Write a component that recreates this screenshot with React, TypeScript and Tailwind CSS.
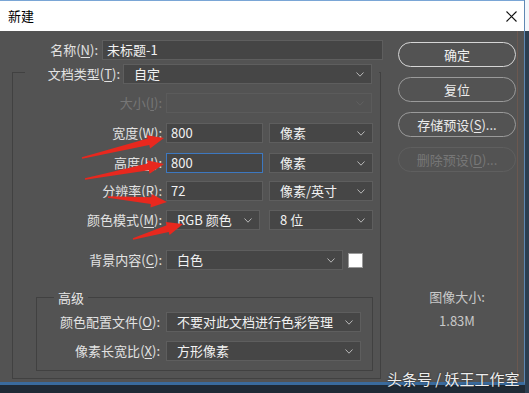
import React from 'react';

const Chevron = ({ dim }: { dim?: boolean }) => (
  <svg width="8" height="5" viewBox="0 0 8 5" className="shrink-0">
    <polyline points="0.5,0.5 4,4.2 7.5,0.5" fill="none" stroke={dim ? '#606060' : '#b8b8b8'} strokeWidth="1" />
  </svg>
);

const Label = ({ text, k, className = '' }: { text: string; k: string; className?: string }) => (
  <span className={`shrink-0 text-right whitespace-nowrap ${className}`}>
    {text}(<span className="underline underline-offset-2">{k}</span>):
  </span>
);

const Select = ({ value, className = '', disabled }: { value?: string; className?: string; disabled?: boolean }) => (
  <div
    className={`flex h-[20px] shrink-0 items-center justify-between border pr-[7px] pl-[10px] ${
      disabled ? 'border-[#5b5b5b] bg-[#535353]' : 'border-[#5e5e5e] bg-[#464646] text-[#f2f2f2]'
    } ${className}`}
  >
    <span className="whitespace-nowrap">{value}</span>
    <Chevron dim={disabled} />
  </div>
);

const Input = ({ value, className = '' }: { value: string; className?: string }) => (
  <div className={`flex h-[20px] shrink-0 items-center border bg-[#454545] px-[4px] text-[#f2f2f2] ${className}`}>
    {value}
  </div>
);

const Button = ({ text, k, primary, disabled }: { text: string; k?: string; primary?: boolean; disabled?: boolean }) => (
  <div
    className={`flex h-[25px] w-[118px] items-center justify-center rounded-full border ${
      primary
        ? 'border-[#d6d6d6] text-[#f0f0f0]'
        : disabled
        ? 'border-[#5f5f5f] text-[#777]'
        : 'border-[#9a9a9a] text-[#ececec]'
    }`}
  >
    {text}
    {k && (
      <>
        (<span className="underline underline-offset-2">{k}</span>)...
      </>
    )}
  </div>
);

// tapered red arrow from tail to tip
const arrow = (x1: number, y1: number, x2: number, y2: number) => {
  const dx = x2 - x1;
  const dy = y2 - y1;
  const len = Math.hypot(dx, dy);
  const ux = dx / len;
  const uy = dy / len;
  const nx = -uy;
  const ny = ux;
  const bx = x2 - ux * 16;
  const by = y2 - uy * 16;
  const p = (x: number, y: number) => `${x.toFixed(1)},${y.toFixed(1)}`;
  return [
    p(x1 + nx * 0.8, y1 + ny * 0.8),
    p(bx + nx * 3.4, by + ny * 3.4),
    p(bx + nx * 6.8, by + ny * 6.8),
    p(x2, y2),
    p(bx - nx * 6.8, by - ny * 6.8),
    p(bx - nx * 3.4, by - ny * 3.4),
    p(x1 - nx * 0.8, y1 - ny * 0.8),
  ].join(' ');
};

export default function App() {
  return (
    <div className="relative flex h-[393px] w-[529px] overflow-hidden bg-[#1f2a35] font-['Noto_Sans_CJK_SC','Noto_Sans',sans-serif] text-[13px] text-[#e2e2e2]">
      <div className="flex h-[385px] w-[525px] shrink-0 flex-col border-r border-b-[3px] border-r-[#5f88b3] border-b-[#3a6b9d]">
        {/* title bar */}
        <div className="flex h-[31px] items-center justify-between border-t border-[#7aa6d6] bg-white pl-[8px] pr-[7px] text-black">
          <span className="text-[13px]">新建</span>
          <svg width="11" height="11" viewBox="0 0 11 11">
            <path d="M0.5 0.5 L10.5 10.5 M10.5 0.5 L0.5 10.5" stroke="#111" strokeWidth="1.1" />
          </svg>
        </div>

        {/* body */}
        <div className="flex h-[351px] bg-[#535353]">
          {/* form */}
          <div className="w-[390px] shrink-0">
            <div className="mt-[9px] flex items-center gap-[4px]">
              <Label text="名称" k="N" className="w-[98px]" />
              <Input value="未标题-1" className="w-[281px] border-[#5e5e5e]" />
            </div>

            <div className="mt-[12px] ml-[12px] w-[369px] border border-[#414141] pb-[7px]">
              <div className="-mt-[9px] ml-[12px] flex w-[354px] items-center gap-[3px] bg-[#535353] pr-[7px]">
                <Label text="文档类型" k="T" className="w-[95px]" />
                <Select value="自定" className="w-[249px]" />
              </div>

              <div className="mt-[9px] flex items-center gap-[4px]">
                <Label text="大小" k="I" className="w-[149px] text-[#767676]" />
                <Select disabled className="w-[206px]" />
              </div>

              <div className="mt-[10px] flex items-center gap-[4px]">
                <Label text="宽度" k="W" className="w-[149px]" />
                <Input value="800" className="w-[97px] border-[#5e5e5e]" />
                <Select value="像素" className="ml-[2px] w-[104px]" />
              </div>

              <div className="mt-[10px] flex items-center gap-[4px]">
                <Label text="高度" k="H" className="w-[149px]" />
                <Input value="800" className="w-[97px] border-[#3d78c0]" />
                <Select value="像素" className="ml-[2px] w-[104px]" />
              </div>

              <div className="mt-[8px] flex items-center gap-[4px]">
                <Label text="分辨率" k="R" className="w-[149px]" />
                <Input value="72" className="w-[97px] border-[#5e5e5e]" />
                <Select value="像素/英寸" className="ml-[2px] w-[104px]" />
              </div>

              <div className="mt-[9px] flex items-center gap-[4px]">
                <Label text="颜色模式" k="M" className="w-[149px]" />
                <Select value="RGB 颜色" className="w-[94px]" />
                <Select value="8 位" className="ml-[5px] w-[104px]" />
              </div>

              <div className="mt-[20px] flex items-center gap-[4px]">
                <Label text="背景内容" k="C" className="w-[149px]" />
                <Select value="白色" className="w-[177px]" />
                <div className="ml-[1px] h-[15px] w-[15px] border border-[#9a9a9a] bg-white" />
              </div>

              <div className="mt-[27px] ml-[23px] w-[337px] border border-[#414141] pb-[9px]">
                <div className="-mt-[10px] flex h-[20px] items-center">
                  <span className="ml-[17px] bg-[#535353] px-[4px] text-[#e6e6e6]">高级</span>
                </div>
                <div className="mt-[4px] flex items-center gap-[6px]">
                  <Label text="颜色配置文件" k="O" className="w-[123px]" />
                  <Select value="不要对此文档进行色彩管理" className="w-[195px]" />
                </div>
                <div className="mt-[9px] flex items-center gap-[6px]">
                  <Label text="像素长宽比" k="X" className="w-[123px]" />
                  <Select value="方形像素" className="w-[195px]" />
                </div>
              </div>
            </div>
          </div>

          {/* buttons */}
          <div className="flex w-[128px] shrink-0 flex-col border-r border-[#6b5850] pl-[8px]">
            <div className="mt-[11px] flex flex-col gap-[10px]">
              <Button text="确定" primary />
              <Button text="复位" />
              <Button text="存储预设" k="S" />
              <Button text="删除预设" k="D" disabled />
            </div>
            <div className="mt-[116px] w-[118px] text-center leading-[18px] text-[#c9c9c9]">图像大小:</div>
            <div className="mt-[6px] w-[118px] text-center leading-[18px] text-[#c9c9c9]">1.83M</div>
          </div>
          <div className="flex-1" />
        </div>
      </div>

      {/* screen edge */}
      <div className="flex flex-1 flex-col">
        <div className="h-[31px] bg-[#f4f7fb]" />
        <div className="flex-1 bg-[#2c3e50]" />
      </div>

      {/* annotation arrows */}
      <svg className="pointer-events-none absolute inset-0" width="529" height="393" viewBox="0 0 529 393">
        <polygon points={arrow(82, 158, 164, 138)} fill="#e8281e" />
        <polygon points={arrow(85, 179, 164, 164)} fill="#e8281e" />
        <polygon points={arrow(108, 197, 167, 202)} fill="#e8281e" />
        <polygon points={arrow(133, 239, 183, 224)} fill="#e8281e" />
      </svg>

      {/* watermark */}
      <div className="absolute left-[387px] top-[369px] text-[15px] leading-[20px] whitespace-nowrap text-[#ededed] [text-shadow:0_0_2px_rgba(0,0,0,0.6)]">
        头条号 / 妖王工作室
      </div>
    </div>
  );
}
